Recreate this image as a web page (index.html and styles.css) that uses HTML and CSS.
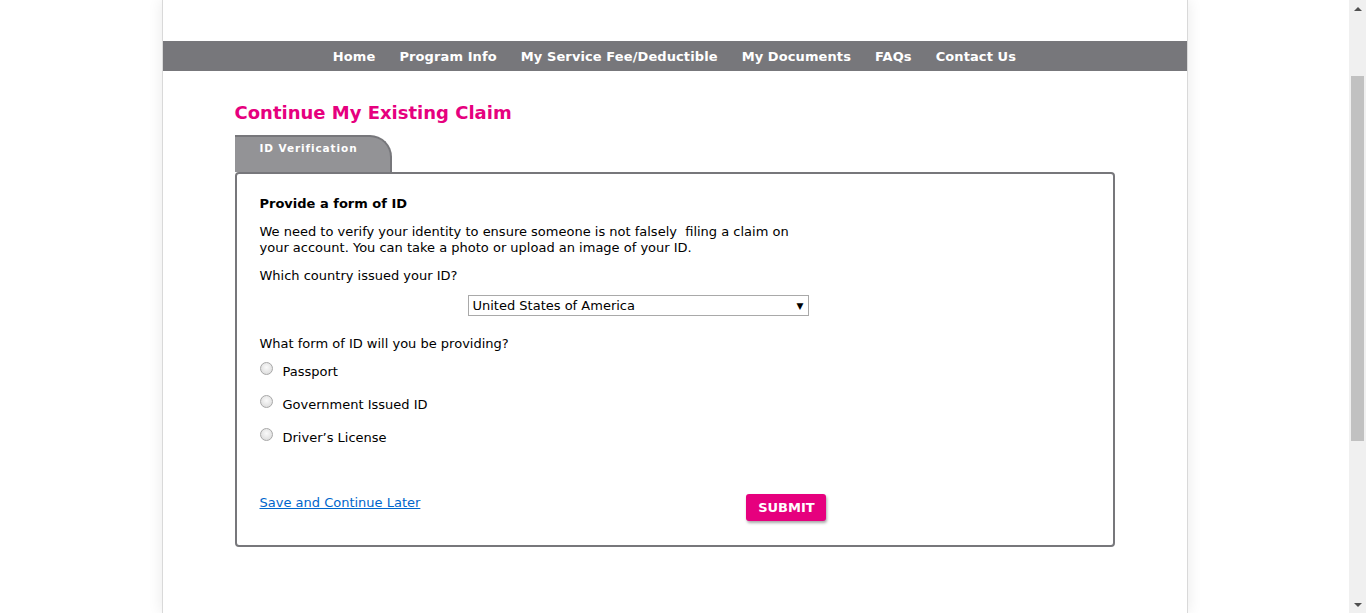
FILE: index.html
```html
<!DOCTYPE html>
<html lang="en">
<head>
<meta charset="utf-8">
<title>Continue My Existing Claim</title>
<link rel="stylesheet" href="styles.css">
</head>
<body>
<div class="viewport">
  <div class="main">
    <div class="page">
      <div class="header"></div>
      <nav class="nav">
        <a href="#">Home</a>
        <a href="#">Program Info</a>
        <a href="#">My Service Fee/Deductible</a>
        <a href="#">My Documents</a>
        <a href="#">FAQs</a>
        <a href="#">Contact Us</a>
      </nav>
      <div class="content">
        <h1 class="title">Continue My Existing Claim</h1>
        <div class="tab">ID Verification</div>
        <div class="box">
          <div class="heading">Provide a form of ID</div>
          <p class="intro">We need to verify your identity to ensure someone is not falsely &nbsp;filing a claim on your account. You can take a photo or upload an image of your ID.</p>
          <p class="question">Which country issued your ID?</p>
          <div class="select-row">
            <div class="select">
              <span>United States of America</span>
              <span class="caret">▼</span>
            </div>
          </div>
          <p class="question q2">What form of ID will you be providing?</p>
          <label class="radio"><span class="dot"></span>Passport</label>
          <label class="radio"><span class="dot"></span>Government Issued ID</label>
          <label class="radio"><span class="dot"></span>Driver’s License</label>
          <div class="actions">
            <a href="#" class="later">Save and Continue Later</a>
            <button class="submit">SUBMIT</button>
          </div>
        </div>
      </div>
    </div>
  </div>
  <div class="scrollbar">
    <div class="arrow up"></div>
    <div class="track"><div class="thumb"></div></div>
    <div class="arrow down"></div>
  </div>
</div>
</body>
</html>
```

FILE: styles.css
```css
html, body {
  margin: 0;
  padding: 0;
  height: 100%;
  overflow: hidden;
  background: #fff;
  font-family: "DejaVu Sans", Verdana, sans-serif;
  color: #000;
}
.viewport {
  display: flex;
  height: 613px;
}
.main {
  flex: 1;
  display: flex;
  justify-content: center;
  overflow: hidden;
}
.page {
  width: 1024px;
  height: 613px;
  background: #fff;
  border-left: 1px solid #d9d9d9;
  border-right: 1px solid #d9d9d9;
  box-shadow: 0 0 14px rgba(0,0,0,0.09);
  flex: none;
}
.header {
  height: 41px;
}
.nav {
  height: 30px;
  background: #77777b;
  display: flex;
  justify-content: center;
  align-items: center;
  gap: 24px;
}
.nav a {
  color: #fff;
  text-decoration: none;
  font-weight: bold;
  font-size: 13px;
  letter-spacing: 0.1px;
}
.content {
  padding: 0 72px 0 72px;
}
.title {
  margin: 30px 0 0 0;
  font-size: 18px;
  line-height: 24px;
  color: #e6007e;
  font-weight: bold;
}
.tab {
  margin-top: 10px;
  width: 130px;
  background: #939396;
  border-top: 2px solid #77777b;
  border-right: 2px solid #77777b;
  border-top-right-radius: 22px;
  color: #fff;
  font-weight: bold;
  font-size: 10.5px;
  letter-spacing: 0.9px;
  padding-left: 25px;
  padding-top: 5px;
  box-sizing: content-box;
  height: 30px;
}
.box {
  border: 2px solid #77777b;
  border-radius: 4px;
  padding: 22px 23px 0 23px;
  box-sizing: border-box;
  height: 375px;
  font-size: 13px;
}
.heading {
  font-weight: bold;
  line-height: 16px;
}
.intro {
  margin: 12px 0 0 0;
  width: 545px;
  line-height: 16px;
}
.question {
  margin: 12px 0 0 0;
  line-height: 16px;
}
.select-row {
  padding-left: 208px;
  margin-top: 11px;
}
.select {
  width: 341px;
  height: 21px;
  box-sizing: border-box;
  border: 1px solid #a9a9a9;
  display: flex;
  justify-content: space-between;
  align-items: center;
  padding: 0 4px 0 4px;
  font-size: 13px;
}
.caret {
  font-size: 9px;
}
.q2 {
  margin-top: 20px;
}
.radio {
  display: flex;
  align-items: center;
  height: 16px;
}
.radio + .radio {
  margin-top: 17px;
}
.q2 + .radio {
  margin-top: 11px;
}
.dot {
  width: 11px;
  height: 11px;
  border-radius: 50%;
  border: 1px solid #a8a8a8;
  background: radial-gradient(circle at 50% 40%, #fafafa, #d6d6d6);
  margin-right: 10px;
  margin-top: -5px;
}
.actions {
  display: flex;
  align-items: flex-start;
  margin-top: 49px;
}
.later {
  color: #0066cc;
  font-size: 13px;
  margin-top: 1px;
}
.submit {
  margin-left: 326px;
  width: 80px;
  height: 27px;
  border: none;
  border-radius: 3px;
  background: #e6007e;
  color: #fff;
  font-family: "DejaVu Sans", Verdana, sans-serif;
  font-weight: bold;
  font-size: 13px;
  box-shadow: 1px 2px 3px rgba(0,0,0,0.35);
  padding: 0;
}
.scrollbar {
  width: 17px;
  background: #f0f0f0;
  display: flex;
  flex-direction: column;
  flex: none;
}
.arrow {
  height: 17px;
  display: flex;
  align-items: center;
  justify-content: center;
}
.arrow.up::before {
  content: "";
  border-left: 4px solid transparent;
  border-right: 4px solid transparent;
  border-bottom: 4px solid #505050;
}
.arrow.down::before {
  content: "";
  border-left: 4px solid transparent;
  border-right: 4px solid transparent;
  border-top: 4px solid #505050;
}
.track {
  flex: 1;
  padding: 59px 2px 0 2px;
}
.thumb {
  height: 365px;
  background: #c1c1c1;
}
```
